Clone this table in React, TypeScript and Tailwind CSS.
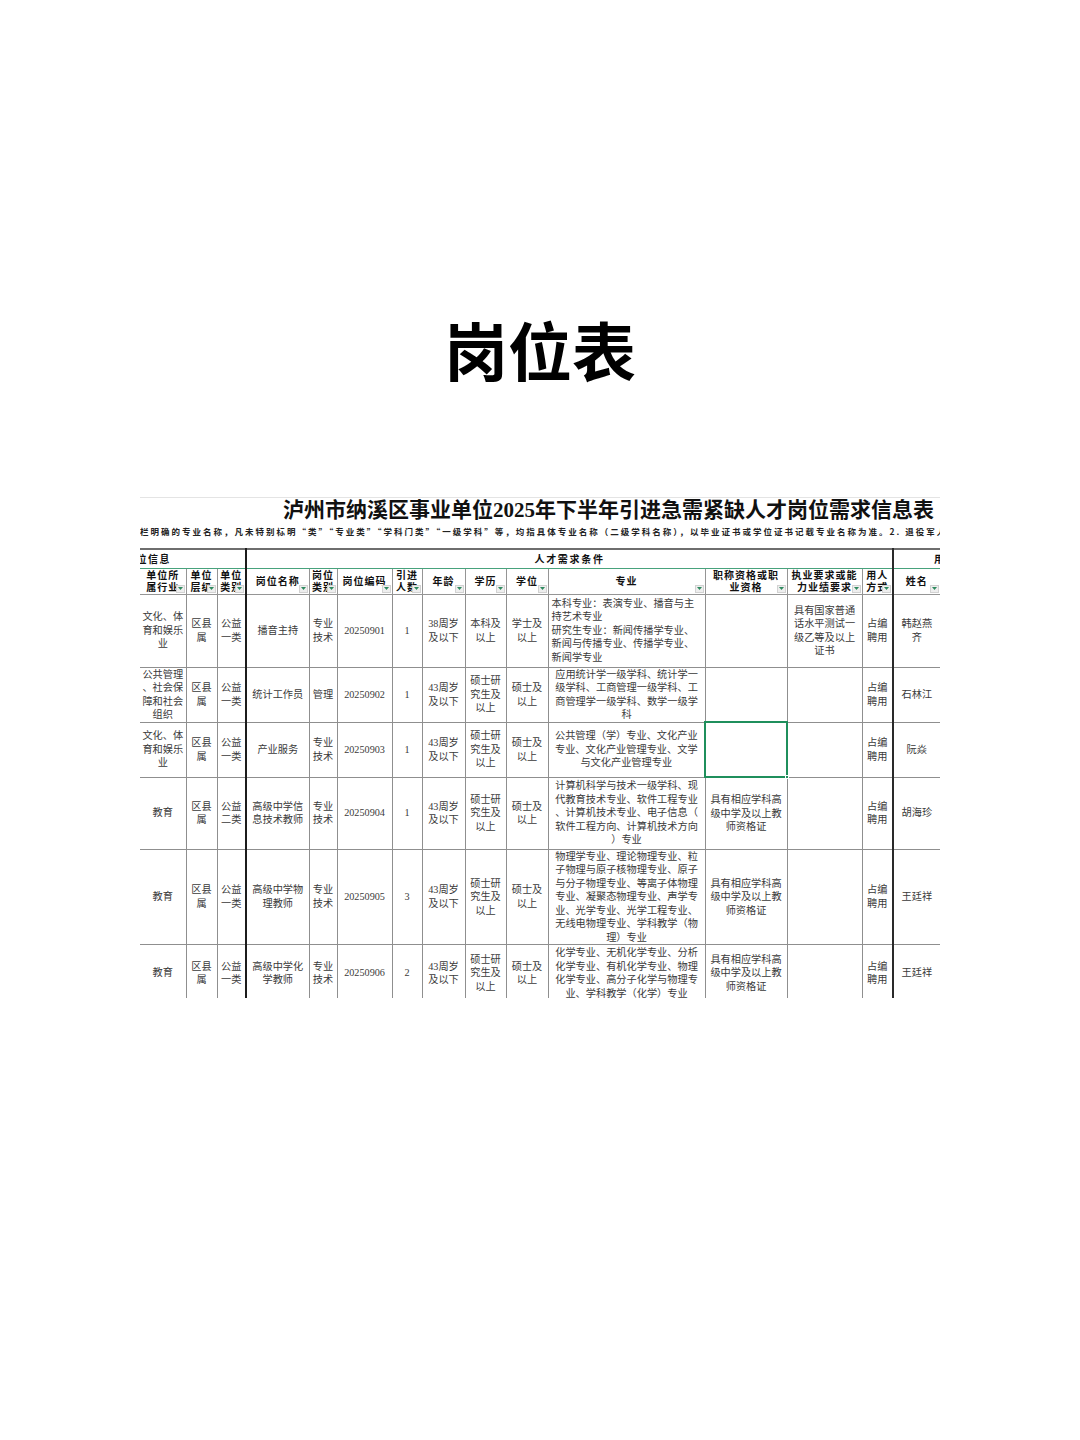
import React from 'react';

const sans = { fontFamily: '"Noto Sans CJK SC", "Noto Sans", sans-serif' };

// column widths, last one is outside the visible crop
const widths = ['w-[46px]', 'w-[31px]', 'w-[29px]', 'w-[63px]', 'w-[28px]', 'w-[55px]', 'w-[30px]', 'w-[43px]', 'w-[41px]', 'w-[42px]', 'w-[157px]', 'w-[82px]', 'w-[75px]', 'w-[31px]', 'w-[47px]', 'w-[99px]'];

const headers = ['单位所|属行业', '单位|层级', '单位|类别', '岗位名称', '岗位|类别', '岗位编码', '引进|人数', '年龄', '学历', '学位', '专业', '职称资格或职|业资格', '执业要求或能|力业绩要求', '用人|方式', '姓名'];

interface Row {
  h: string;
  cells: string[];
  majorLeft?: boolean;
  selected?: number;
}

const rows: Row[] = [
  {
    h: 'h-[73px]',
    majorLeft: true,
    cells: ['文化、体|育和娱乐|业', '区县|属', '公益|一类', '播音主持', '专业|技术', '20250901', '1', '38周岁|及以下', '本科及|以上', '学士及|以上', '本科专业：表演专业、播音与主|持艺术专业|研究生专业：新闻传播学专业、|新闻与传播专业、传播学专业、|新闻学专业', '', '具有国家普通|话水平测试一|级乙等及以上|证书', '占编|聘用', '韩赵燕|齐'],
  },
  {
    h: 'h-[55px]',
    cells: ['公共管理|、社会保|障和社会|组织', '区县|属', '公益|一类', '统计工作员', '管理', '20250902', '1', '43周岁|及以下', '硕士研|究生及|以上', '硕士及|以上', '应用统计学一级学科、统计学一|级学科、工商管理一级学科、工|商管理学一级学科、数学一级学|科', '', '', '占编|聘用', '石林江'],
  },
  {
    h: 'h-[55px]',
    selected: 11,
    cells: ['文化、体|育和娱乐|业', '区县|属', '公益|一类', '产业服务', '专业|技术', '20250903', '1', '43周岁|及以下', '硕士研|究生及|以上', '硕士及|以上', '公共管理（学）专业、文化产业|专业、文化产业管理专业、文学|与文化产业管理专业', '', '', '占编|聘用', '阮焱'],
  },
  {
    h: 'h-[72px]',
    cells: ['教育', '区县|属', '公益|二类', '高级中学信|息技术教师', '专业|技术', '20250904', '1', '43周岁|及以下', '硕士研|究生及|以上', '硕士及|以上', '计算机科学与技术一级学科、现|代教育技术专业、软件工程专业|、计算机技术专业、电子信息（|软件工程方向、计算机技术方向|）专业', '具有相应学科高|级中学及以上教|师资格证', '', '占编|聘用', '胡海珍'],
  },
  {
    h: 'h-[95px]',
    cells: ['教育', '区县|属', '公益|一类', '高级中学物|理教师', '专业|技术', '20250905', '3', '43周岁|及以下', '硕士研|究生及|以上', '硕士及|以上', '物理学专业、理论物理专业、粒|子物理与原子核物理专业、原子|与分子物理专业、等离子体物理|专业、凝聚态物理专业、声学专|业、光学专业、光学工程专业、|无线电物理专业、学科教学（物|理）专业', '具有相应学科高|级中学及以上教|师资格证', '', '占编|聘用', '王廷祥'],
  },
  {
    h: 'h-[57px]',
    cells: ['教育', '区县|属', '公益|一类', '高级中学化|学教师', '专业|技术', '20250906', '2', '43周岁|及以下', '硕士研|究生及|以上', '硕士及|以上', '化学专业、无机化学专业、分析|化学专业、有机化学专业、物理|化学专业、高分子化学与物理专|业、学科教学（化学）专业', '具有相应学科高|级中学及以上教|师资格证', '', '占编|聘用', '王廷祥'],
  },
];

// Excel style filter button in header cells
const FilterButton = () => (
  <span className="absolute right-[1px] bottom-[1px] flex h-[8px] w-[9px] items-center justify-center border border-[#d2d2d2] bg-[#eeeeee]">
    <svg width="5" height="3" viewBox="0 0 5 3">
      <path d="M0 0h5L2.5 3z" fill="#2f8a5f" />
    </svg>
  </span>
);

const Lines = ({ text }: { text: string }) => (
  <>
    {text.split('|').map((line, i) => (
      <span key={i} className="block whitespace-nowrap">
        {line}
      </span>
    ))}
  </>
);

// thick separators after column 3 and column 14
const edge = (i: number) => {
  if (i === 0) return 'border-l-0';
  if (i === 2) return 'border-r-2 border-r-[#1c1c1c]';
  if (i === 13) return 'border-r-2 border-r-[#2a2a2a]';
  return '';
};

export default function App() {
  return (
    <div className="h-[1440px] w-[1080px] overflow-hidden bg-white" style={sans}>
      <div className="mt-[316px] h-[64px] text-center text-[64px] font-bold leading-[64px] text-black">岗位表</div>

      <div className="mt-[115px] ml-[140px] h-[503px] w-[800px] overflow-hidden">
        <div className="mt-[2px] border-t border-[#e4e4e4]" />
        <div
          className="h-[26px] whitespace-nowrap pl-[143px] text-[21px] font-semibold leading-[25px] text-[#111]"
          style={{ fontFamily: '"Liberation Serif", "Noto Sans CJK SC", serif' }}
        >
          泸州市纳溪区事业单位2025年下半年引进急需紧缺人才岗位需求信息表
        </div>
        <div className="h-[24px] whitespace-nowrap text-[8.5px] font-bold leading-[14px] tracking-[2px] text-[#222]">
          栏明确的专业名称，凡未特别标明“类”“专业类”“学科门类”“一级学科”等，均指具体专业名称（二级学科名称），以毕业证书或学位证书记载专业名称为准。2. 退役军人
        </div>

        <table className="w-[899px] table-fixed border-collapse">
          <colgroup>
            {widths.map((w, i) => (
              <col key={i} className={w} />
            ))}
          </colgroup>
          <tbody>
            <tr className="h-[19px]">
              <td colSpan={3} className="border-t-2 border-r-2 border-b border-t-[#6e6e6e] border-r-[#1c1c1c] border-b-[#47a27c] p-0 text-left text-[10px] font-bold leading-[17px] tracking-[1.5px] text-[#111]">
                <div className="-ml-[15px] whitespace-nowrap">单位信息</div>
              </td>
              <td colSpan={11} className="border-t-2 border-r-2 border-b border-t-[#6e6e6e] border-r-[#2a2a2a] border-b-[#47a27c] p-0 text-center text-[10px] font-bold leading-[17px] tracking-[1.7px] text-[#111]">
                人才需求条件
              </td>
              <td colSpan={2} className="border-t-2 border-b border-t-[#6e6e6e] border-b-[#47a27c] p-0 text-left text-[10px] font-bold leading-[17px] tracking-[1.5px] text-[#111]">
                <div className="whitespace-nowrap pl-[40px]">用人单位信息</div>
              </td>
            </tr>

            <tr className="h-[26px]">
              {headers.map((h, i) => (
                <td
                  key={i}
                  className={`relative overflow-hidden border border-[#959595] p-0 text-center align-middle text-[10px] font-bold leading-[12px] tracking-[1px] text-[#111] ${edge(i)}`}
                >
                  <Lines text={h} />
                  <FilterButton />
                </td>
              ))}
              <td className="border border-[#959595]" />
            </tr>

            {rows.map((row, r) => (
              <tr key={r} className={row.h}>
                {row.cells.map((c, i) => {
                  const isMajor = i === 10;
                  const isSel = row.selected === i;
                  return (
                    <td
                      key={i}
                      className={`relative px-[1px] py-0 align-middle text-[10.2px] leading-[13.5px] text-[#3a3a3a] ${
                        isMajor && row.majorLeft ? 'pl-[3px] text-left' : 'text-center'
                      } ${isSel ? 'border-2 border-[#1f8f5c]' : `border border-[#8f8f8f] ${edge(i)}`}`}
                      style={{ fontFamily: '"Liberation Serif", "Noto Sans CJK SC", serif' }}
                    >
                      {c && <Lines text={c} />}
                      {isSel && <span className="absolute -right-[3px] -bottom-[3px] h-[4px] w-[4px] border border-white bg-[#1f8f5c]" />}
                    </td>
                  );
                })}
                <td className="border border-[#8f8f8f]" />
              </tr>
            ))}
          </tbody>
        </table>
      </div>
    </div>
  );
}
